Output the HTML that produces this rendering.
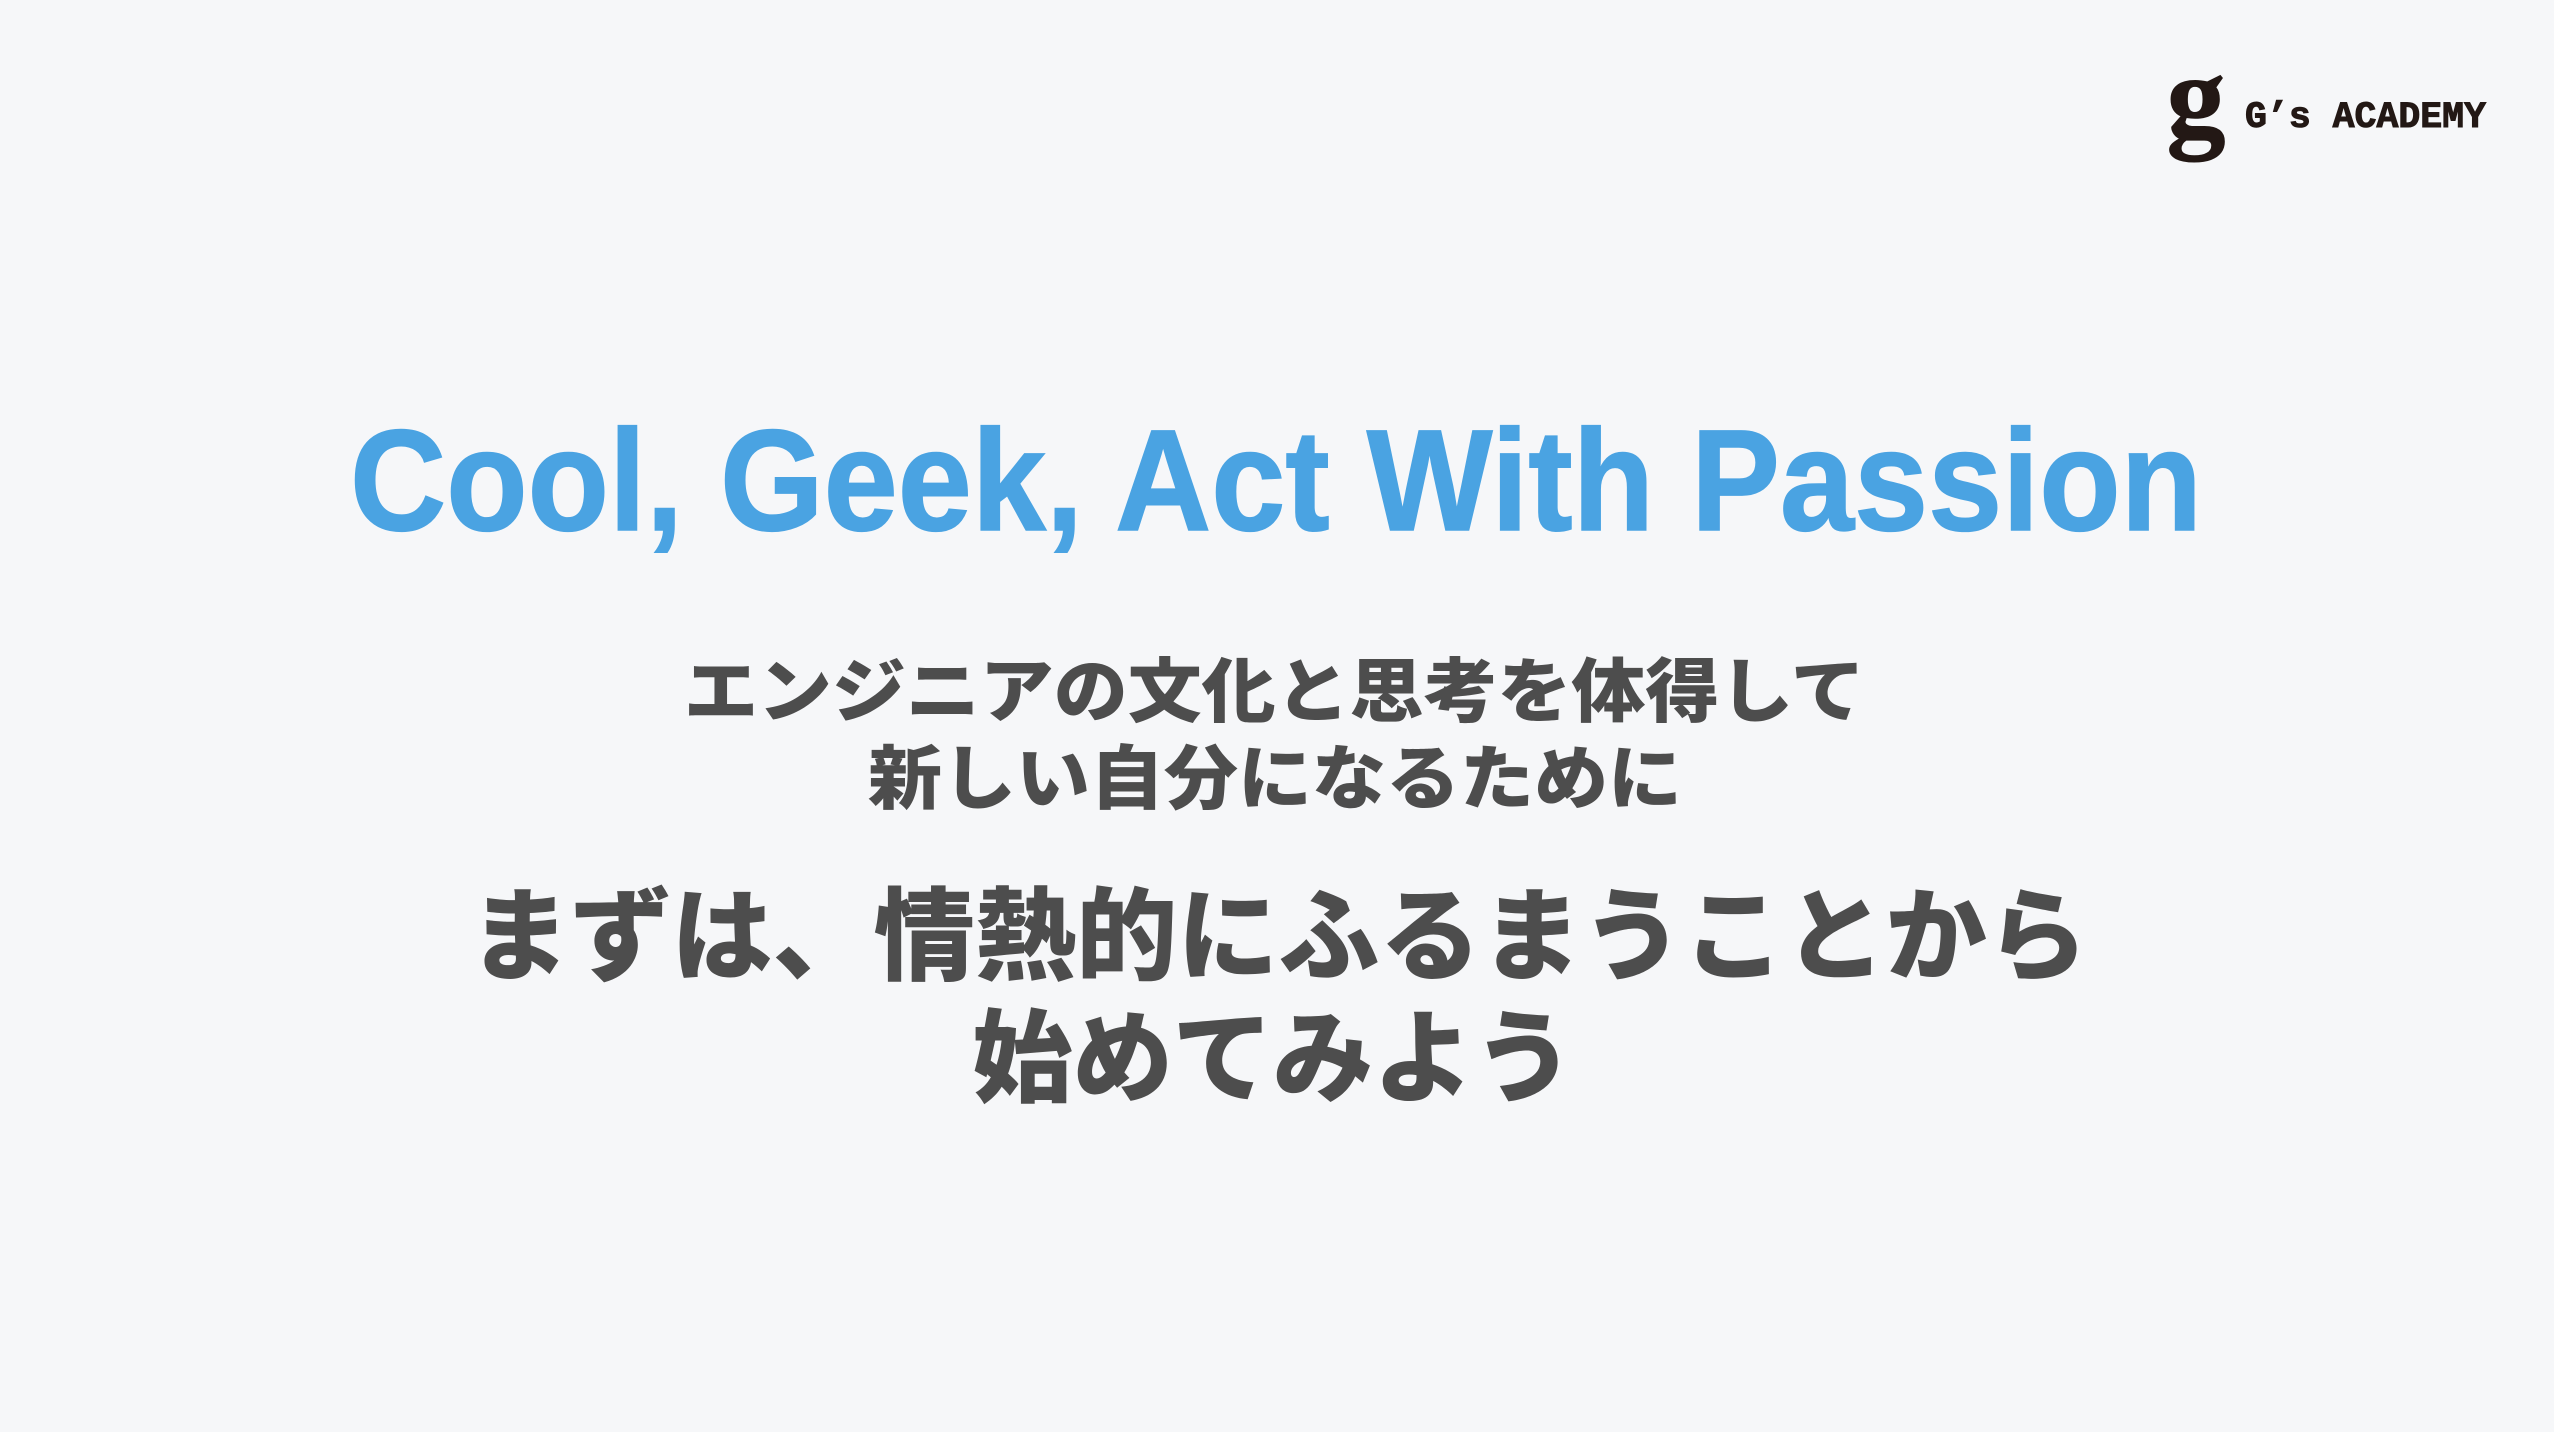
<!DOCTYPE html>
<html><head><meta charset="utf-8"><style>
html,body{margin:0;padding:0;background:#f6f7f9;}
svg{display:block}
</style></head><body>
<svg width="2554" height="1432" viewBox="0 0 2554 1432" xmlns="http://www.w3.org/2000/svg">
<rect width="2554" height="1432" fill="#f6f7f9"/>
<!-- logo -->
<text x="2196" y="136" font-family="Liberation Serif, serif" font-weight="bold" font-size="118" fill="#231815" text-anchor="middle" stroke="#231815" stroke-width="1">g</text>
<text x="2245" y="127" font-family="Liberation Mono, monospace" font-weight="bold" font-size="37" fill="#231815" stroke="#231815" stroke-width="1" textLength="241" lengthAdjust="spacingAndGlyphs">G’s ACADEMY</text>
<!-- title -->
<text x="350" y="530" font-family="Liberation Sans, sans-serif" font-weight="bold" font-size="144" fill="#4aa3e2" stroke="#4aa3e2" stroke-width="1.5" textLength="1852" lengthAdjust="spacingAndGlyphs">Cool, Geek, Act With Passion</text>
<g font-family="'Noto Sans CJK JP', sans-serif" font-weight="900" fill="#4d4d4d">
<text x="684" y="716" font-size="70" textLength="1181" lengthAdjust="spacingAndGlyphs">エンジニアの文化と思考を体得して</text>
<text x="868" y="803" font-size="70" textLength="814" lengthAdjust="spacingAndGlyphs">新しい自分になるために</text>
<text x="469" y="972" font-size="101" textLength="1619" lengthAdjust="spacingAndGlyphs">まずは、情熱的にふるまうことから</text>
<text x="972" y="1094" font-size="101" textLength="602" lengthAdjust="spacingAndGlyphs">始めてみよう</text>
</g>
</svg>
</body></html>
